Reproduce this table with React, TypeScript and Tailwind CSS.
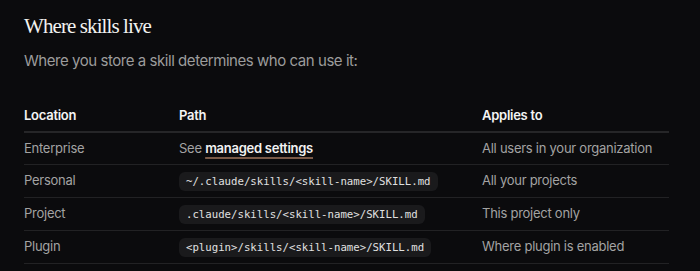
const rows = [
  { loc: "Enterprise", path: null, applies: "All users in your organization" },
  { loc: "Personal", path: "~/.claude/skills/<skill-name>/SKILL.md", applies: "All your projects" },
  { loc: "Project", path: ".claude/skills/<skill-name>/SKILL.md", applies: "This project only" },
  { loc: "Plugin", path: "<plugin>/skills/<skill-name>/SKILL.md", applies: "Where plugin is enabled" },
];

export default function App() {
  return (
    <div className="min-h-screen w-[700px] bg-[#0b0b0d] px-6 pt-[11px] font-['Inter',sans-serif]">
      <h2 className="font-['Liberation_Serif',serif] text-[21px] leading-[30px] tracking-[-0.043em] text-[#f2f2f0]">
        Where skills live
      </h2>
      <p className="mt-[9px] text-[15px] leading-[22px] tracking-[-0.03em] text-[#9c9c9c]">
        Where you store a skill determines who can use it:
      </p>

      <table className="mt-[34px] w-[645px] border-collapse text-left text-[13px] tracking-[-0.02em]">
        <thead>
          <tr className="border-b-2 border-[#262628]">
            <th className="w-[155px] pb-[5px] font-semibold text-[#f4f4f4]">Location</th>
            <th className="w-[303px] pb-[5px] font-semibold text-[#f4f4f4]">Path</th>
            <th className="pb-[5px] font-semibold text-[#f4f4f4]">Applies to</th>
          </tr>
        </thead>
        <tbody>
          {rows.map((r) => (
            <tr key={r.loc} className="h-[33px] border-b border-[#222224] text-[#a3a3a3]">
              <td>{r.loc}</td>
              <td>
                {r.path ? (
                  <code className="rounded-[6px] bg-[#1a1a1c] px-[7px] py-[3px] font-['DejaVu_Sans_Mono',monospace] text-[10.7px] tracking-normal text-[#e0e0e0]">
                    {r.path}
                  </code>
                ) : (
                  <span>
                    See{" "}
                    <a className="font-semibold text-[#f2f2f2] underline decoration-[#7a5a48] decoration-[1.5px] underline-offset-[4px]">
                      managed settings
                    </a>
                  </span>
                )}
              </td>
              <td>{r.applies}</td>
            </tr>
          ))}
        </tbody>
      </table>
    </div>
  );
}
